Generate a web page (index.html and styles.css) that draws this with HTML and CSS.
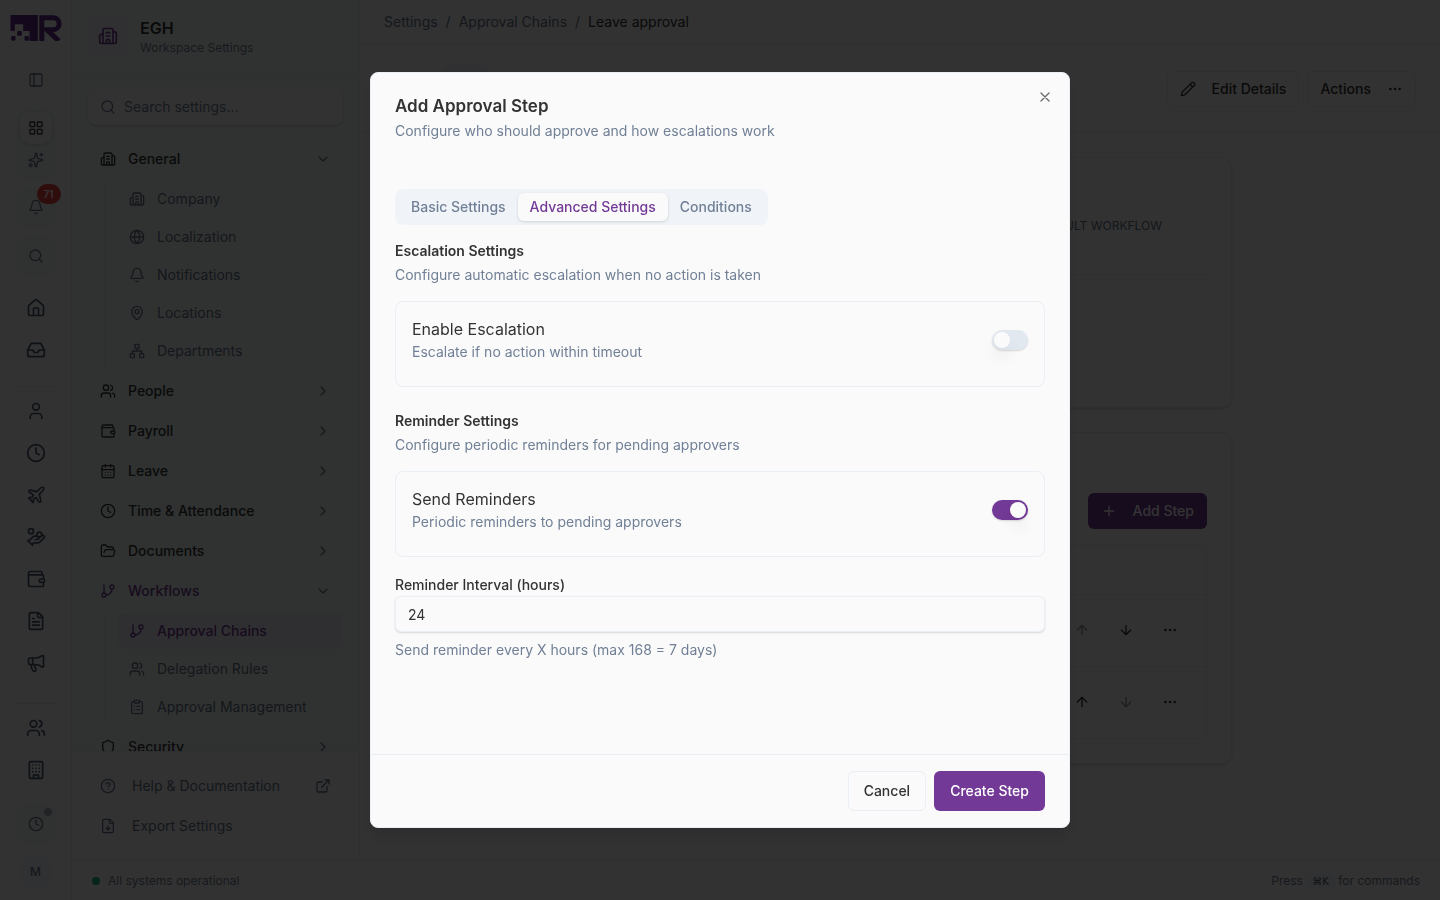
FILE: index.html
```html
<!DOCTYPE html>
<html lang="en">
<head>
<meta charset="utf-8">
<meta name="viewport" content="width=device-width, initial-scale=1">
<title>Leave approval</title>
<link rel="stylesheet" href="styles.css">
</head>
<body>
<svg class="sprite" aria-hidden="true">
  <symbol id="building2" viewBox="0 0 24 24"><path d="M10 12h4M10 8h4M14 21v-3a2 2 0 0 0-4 0v3M6 10H4a2 2 0 0 0-2 2v7a2 2 0 0 0 2 2h16a2 2 0 0 0 2-2V9a2 2 0 0 0-2-2h-2M6 21V5a2 2 0 0 1 2-2h8a2 2 0 0 1 2 2v16"/></symbol>
  <symbol id="panel" viewBox="0 0 24 24"><rect width="18" height="18" x="3" y="3" rx="2"/><path d="M9 3v18"/></symbol>
  <symbol id="grid" viewBox="0 0 24 24"><rect width="7" height="7" x="3" y="3" rx="1"/><rect width="7" height="7" x="14" y="3" rx="1"/><rect width="7" height="7" x="14" y="14" rx="1"/><rect width="7" height="7" x="3" y="14" rx="1"/></symbol>
  <symbol id="sparkles" viewBox="0 0 24 24"><path d="M11 2.8a1 1 0 0 1 2 0l1 5.6a2 2 0 0 0 1.600 1.600l5.600 1a1 1 0 0 1 0 2l-5.600 1a2 2 0 0 0-1.600 1.600l-1 5.600a1 1 0 0 1-2 0l-1-5.600a2 2 0 0 0-1.600-1.600l-5.600-1a1 1 0 0 1 0-2l5.600-1a2 2 0 0 0 1.600-1.600zM20 2v4M22 4h-4"/><circle cx="4" cy="20" r="2"/></symbol>
  <symbol id="bell" viewBox="0 0 24 24"><path d="M10.268 21a2 2 0 0 0 3.464 0M3.262 15.326A1 1 0 0 0 4 17h16a1 1 0 0 0 .74-1.673C19.410 13.956 18 12.499 18 8A6 6 0 0 0 6 8c0 4.499-1.411 5.956-2.738 7.326"/></symbol>
  <symbol id="search" viewBox="0 0 24 24"><circle cx="11" cy="11" r="8"/><path d="m21 21-4.300-4.300"/></symbol>
  <symbol id="home" viewBox="0 0 24 24"><path d="M15 21v-8a1 1 0 0 0-1-1h-4a1 1 0 0 0-1 1v8M3 10a2 2 0 0 1 .709-1.528l7-6a2 2 0 0 1 2.582 0l7 6A2 2 0 0 1 21 10v9a2 2 0 0 1-2 2H5a2 2 0 0 1-2-2z"/></symbol>
  <symbol id="inbox" viewBox="0 0 24 24"><path d="M22 12h-6l-2 3h-4l-2-3H2M5.450 5.110 2 12v6a2 2 0 0 0 2 2h16a2 2 0 0 0 2-2v-6l-3.450-6.890A2 2 0 0 0 16.760 4H7.240a2 2 0 0 0-1.790 1.110z"/></symbol>
  <symbol id="user" viewBox="0 0 24 24"><path d="M19 21v-2a4 4 0 0 0-4-4H9a4 4 0 0 0-4 4v2"/><circle cx="12" cy="7" r="4"/></symbol>
  <symbol id="clock" viewBox="0 0 24 24"><circle cx="12" cy="12" r="10"/><path d="M12 6v6l4 2"/></symbol>
  <symbol id="plane" viewBox="0 0 24 24"><path d="M17.800 19.200 16 11l3.500-3.500C21 6 21.500 4 21 3c-1-.5-3 0-4.500 1.500L13 8 4.800 6.200c-.5-.1-.9.1-1.100.5l-.3.5c-.2.5-.1 1 .3 1.300L9 12l-2 3H4l-1 1 3 2 2 3 1-1v-3l3-2 3.500 5.300c.3.400.8.500 1.300.3l.5-.2c.4-.3.600-.7.500-1.200z"/></symbol>
  <symbol id="handcoins" viewBox="0 0 24 24"><path d="M11 15h2a2 2 0 1 0 0-4h-3c-.6 0-1.100.2-1.400.6L3 17"/><path d="m7 21 1.600-1.400c.3-.4.800-.6 1.400-.6h4c1.100 0 2.100-.4 2.800-1.200l4.600-4.400a2 2 0 0 0-2.750-2.910l-4.200 3.900M2 16l6 6"/><circle cx="16" cy="9" r="2.900"/><circle cx="6" cy="5" r="3"/></symbol>
  <symbol id="wallet" viewBox="0 0 24 24"><path d="M19 7V4a1 1 0 0 0-1-1H5a2 2 0 0 0 0 4h15a1 1 0 0 1 1 1v4h-3a2 2 0 0 0 0 4h3a1 1 0 0 0 1-1v-2a1 1 0 0 0-1-1M3 5v14a2 2 0 0 0 2 2h15a1 1 0 0 0 1-1v-4"/></symbol>
  <symbol id="file" viewBox="0 0 24 24"><path d="M15 2H6a2 2 0 0 0-2 2v16a2 2 0 0 0 2 2h12a2 2 0 0 0 2-2V7ZM14 2v4a2 2 0 0 0 2 2h4M10 9H8M16 13H8M16 17H8"/></symbol>
  <symbol id="megaphone" viewBox="0 0 24 24"><path d="M11 6a13 13 0 0 0 8.400-2.800A1 1 0 0 1 21 4v12a1 1 0 0 1-1.600.8A13 13 0 0 0 11 14H5a2 2 0 0 1-2-2V8a2 2 0 0 1 2-2zM6 14a12 12 0 0 0 2.400 7.200 2 2 0 0 0 3.200-2.400A8 8 0 0 1 10 14M8 6v8"/></symbol>
  <symbol id="people" viewBox="0 0 24 24"><path d="M2 21v-2a4 4 0 0 1 4-4h6a4 4 0 0 1 4 4v2M16 3.130a4 4 0 0 1 0 7.750M22 21v-2a4 4 0 0 0-3-3.870"/><circle cx="9" cy="7" r="4"/></symbol>
  <symbol id="building" viewBox="0 0 24 24"><rect width="16" height="20" x="4" y="2" rx="2"/><path d="M9 22v-4h6v4M8 6h.01M16 6h.01M12 6h.01M12 10h.01M12 14h.01M16 10h.01M16 14h.01M8 10h.01M8 14h.01"/></symbol>
  <symbol id="globe" viewBox="0 0 24 24"><circle cx="12" cy="12" r="10"/><path d="M12 2a14.500 14.500 0 0 0 0 20 14.500 14.500 0 0 0 0-20M2 12h20"/></symbol>
  <symbol id="pin" viewBox="0 0 24 24"><path d="M20 10c0 4.993-5.539 10.193-7.399 11.799a1 1 0 0 1-1.202 0C9.539 20.193 4 14.993 4 10a8 8 0 0 1 16 0"/><circle cx="12" cy="10" r="3"/></symbol>
  <symbol id="network" viewBox="0 0 24 24"><rect x="16" y="16" width="6" height="6" rx="1"/><rect x="2" y="16" width="6" height="6" rx="1"/><rect x="9" y="2" width="6" height="6" rx="1"/><path d="M5 16v-3a1 1 0 0 1 1-1h12a1 1 0 0 1 1 1v3M12 12V8"/></symbol>
  <symbol id="calendar" viewBox="0 0 24 24"><path d="M8 2v4M16 2v4M3 10h18M8 14h.01M12 14h.01M16 14h.01M8 18h.01M12 18h.01M16 18h.01"/><rect width="18" height="18" x="3" y="4" rx="2"/></symbol>
  <symbol id="folder" viewBox="0 0 24 24"><path d="m6 14 1.500-2.900A2 2 0 0 1 9.240 10H20a2 2 0 0 1 1.940 2.500l-1.540 6a2 2 0 0 1-1.950 1.500H4a2 2 0 0 1-2-2V5a2 2 0 0 1 2-2h3.900a2 2 0 0 1 1.690.9l.81 1.200a2 2 0 0 0 1.670.9H18a2 2 0 0 1 2 2v2"/></symbol>
  <symbol id="branch" viewBox="0 0 24 24"><path d="M6 3v12M18 9a9 9 0 0 1-9 9"/><circle cx="18" cy="6" r="3"/><circle cx="6" cy="18" r="3"/></symbol>
  <symbol id="clipboard" viewBox="0 0 24 24"><rect width="8" height="4" x="8" y="2" rx="1"/><path d="M16 4h2a2 2 0 0 1 2 2v14a2 2 0 0 1-2 2H6a2 2 0 0 1-2-2V6a2 2 0 0 1 2-2h2M12 11h4M12 16h4M8 11h.01M8 16h.01"/></symbol>
  <symbol id="shield" viewBox="0 0 24 24"><path d="M20 13c0 5-3.500 7.500-7.660 8.950a1 1 0 0 1-.67-.01C7.500 20.500 4 18 4 13V6a1 1 0 0 1 1-1c2 0 4.500-1.200 6.240-2.720a1.170 1.170 0 0 1 1.520 0C14.510 3.810 17 5 19 5a1 1 0 0 1 1 1z"/></symbol>
  <symbol id="help" viewBox="0 0 24 24"><circle cx="12" cy="12" r="10"/><path d="M9.090 9a3 3 0 0 1 5.830 1c0 2-3 3-3 3M12 17h.01"/></symbol>
  <symbol id="external" viewBox="0 0 24 24"><path d="M15 3h6v6M10 14 21 3M18 13v6a2 2 0 0 1-2 2H5a2 2 0 0 1-2-2V8a2 2 0 0 1 2-2h6"/></symbol>
  <symbol id="filedown" viewBox="0 0 24 24"><path d="M15 2H6a2 2 0 0 0-2 2v16a2 2 0 0 0 2 2h12a2 2 0 0 0 2-2V7ZM14 2v4a2 2 0 0 0 2 2h4M12 18v-6M9 15l3 3 3-3"/></symbol>
  <symbol id="right" viewBox="0 0 24 24"><path d="m9 18 6-6-6-6"/></symbol>
  <symbol id="down" viewBox="0 0 24 24"><path d="m6 9 6 6 6-6"/></symbol>
  <symbol id="pencil" viewBox="0 0 24 24"><path d="M21.174 6.812a1 1 0 0 0-3.986-3.987L3.842 16.174a2 2 0 0 0-.5.83l-1.321 4.352a.5.5 0 0 0 .623.622l4.353-1.320a2 2 0 0 0 .83-.497zM15 5l4 4"/></symbol>
  <symbol id="dots" viewBox="0 0 24 24"><circle cx="12" cy="12" r="1"/><circle cx="19" cy="12" r="1"/><circle cx="5" cy="12" r="1"/></symbol>
  <symbol id="plus" viewBox="0 0 24 24"><path d="M5 12h14M12 5v14"/></symbol>
  <symbol id="arrowup" viewBox="0 0 24 24"><path d="m5 12 7-7 7 7M12 19V5"/></symbol>
  <symbol id="arrowdown" viewBox="0 0 24 24"><path d="M12 5v14M19 12l-7 7-7-7"/></symbol>
  <symbol id="close" viewBox="0 0 24 24"><path d="M18 6 6 18M6 6l12 12"/></symbol>
</svg>

<div class="app">
  <nav class="rail" aria-label="Primary">
    <svg class="logo" viewBox="0 0 153 78" role="img" aria-label="Logo">
      <path d="M3 0H82V78H57V48H38V28H13V48H0V3a3 3 0 0 1 3-3z"/>
      <rect x="20" y="48" width="14" height="14" rx="3"/><rect x="2" y="63" width="13" height="14" rx="4"/><rect x="42" y="63" width="13" height="14" rx="4"/>
      <path class="logo-line" d="M94 78V8H128a18 18 0 0 1 0 36H109L145 78"/>
    </svg>
    <button class="rail-toggle" aria-label="Toggle sidebar"><svg class="icon"><use href="#panel"/></svg></button>
    <div class="rail-switch">
      <button class="rail-pill on" aria-label="Modules"><svg class="icon"><use href="#grid"/></svg></button>
      <button class="rail-pill" aria-label="Assistant"><svg class="icon"><use href="#sparkles"/></svg></button>
    </div>
    <div class="rail-tools">
      <button class="rail-tile" aria-label="Alerts"><svg class="icon"><use href="#bell"/></svg><span class="count">71</span></button>
      <button class="rail-tile" aria-label="Search"><svg class="icon"><use href="#search"/></svg></button>
    </div>
    <div class="rail-group first">
      <a href="#" aria-label="Home"><svg class="icon lg"><use href="#home"/></svg></a>
      <a href="#" aria-label="Inbox"><svg class="icon lg"><use href="#inbox"/></svg></a>
    </div>
    <div class="rail-group">
      <a href="#" aria-label="Profile"><svg class="icon lg"><use href="#user"/></svg></a>
      <a href="#" aria-label="Time"><svg class="icon lg"><use href="#clock"/></svg></a>
      <a href="#" aria-label="Leave"><svg class="icon lg"><use href="#plane"/></svg></a>
      <a href="#" aria-label="Benefits"><svg class="icon lg"><use href="#handcoins"/></svg></a>
      <a href="#" aria-label="Payroll"><svg class="icon lg"><use href="#wallet"/></svg></a>
      <a href="#" aria-label="Documents"><svg class="icon lg"><use href="#file"/></svg></a>
      <a href="#" aria-label="Announcements"><svg class="icon lg"><use href="#megaphone"/></svg></a>
    </div>
    <div class="rail-group last">
      <a href="#" aria-label="People"><svg class="icon lg"><use href="#people"/></svg></a>
      <a href="#" aria-label="Company"><svg class="icon lg"><use href="#building"/></svg></a>
    </div>
    <div class="rail-end">
      <button class="rail-tile" aria-label="Clock in"><svg class="icon"><use href="#clock"/></svg><span class="dot"></span></button>
      <button class="avatar">M</button>
    </div>
  </nav>

  <div class="shell">
    <div class="columns">
      <aside class="sidebar">
        <header class="workspace">
          <span class="tile"><svg class="icon lg"><use href="#building2"/></svg></span>
          <div><h2>EGH</h2><p>Workspace Settings</p></div>
        </header>
        <label class="search"><svg class="icon"><use href="#search"/></svg><input type="search" placeholder="Search settings..." aria-label="Search settings"></label>
        <nav class="menu" aria-label="Settings">
          <button class="row"><svg class="icon"><use href="#building2"/></svg><span>General</span><svg class="icon chev"><use href="#down"/></svg></button>
          <div class="sub">
            <a href="#"><svg class="icon"><use href="#building2"/></svg>Company</a>
            <a href="#"><svg class="icon"><use href="#globe"/></svg>Localization</a>
            <a href="#"><svg class="icon"><use href="#bell"/></svg>Notifications</a>
            <a href="#"><svg class="icon"><use href="#pin"/></svg>Locations</a>
            <a href="#"><svg class="icon"><use href="#network"/></svg>Departments</a>
          </div>
          <button class="row"><svg class="icon"><use href="#people"/></svg><span>People</span><svg class="icon chev"><use href="#right"/></svg></button>
          <button class="row"><svg class="icon"><use href="#wallet"/></svg><span>Payroll</span><svg class="icon chev"><use href="#right"/></svg></button>
          <button class="row"><svg class="icon"><use href="#calendar"/></svg><span>Leave</span><svg class="icon chev"><use href="#right"/></svg></button>
          <button class="row"><svg class="icon"><use href="#clock"/></svg><span>Time &amp; Attendance</span><svg class="icon chev"><use href="#right"/></svg></button>
          <button class="row"><svg class="icon"><use href="#folder"/></svg><span>Documents</span><svg class="icon chev"><use href="#right"/></svg></button>
          <button class="row current"><svg class="icon"><use href="#branch"/></svg><span>Workflows</span><svg class="icon chev"><use href="#down"/></svg></button>
          <div class="sub">
            <a href="#" class="active" aria-current="page"><svg class="icon"><use href="#branch"/></svg>Approval Chains</a>
            <a href="#"><svg class="icon"><use href="#people"/></svg>Delegation Rules</a>
            <a href="#"><svg class="icon"><use href="#clipboard"/></svg>Approval Management</a>
          </div>
          <button class="row"><svg class="icon"><use href="#shield"/></svg><span>Security</span><svg class="icon chev"><use href="#right"/></svg></button>
        </nav>
        <div class="aside-links">
          <a href="#"><svg class="icon"><use href="#help"/></svg><span>Help &amp; Documentation</span><svg class="icon"><use href="#external"/></svg></a>
          <a href="#"><svg class="icon"><use href="#filedown"/></svg><span>Export Settings</span></a>
        </div>
      </aside>

      <main class="main">
        <nav class="crumbs" aria-label="Breadcrumb"><a href="#">Settings</a><span>/</span><a href="#">Approval Chains</a><span>/</span><b>Leave approval</b></nav>
        <header class="page-head">
          <span class="badge"></span>
          <div class="head-actions">
            <button class="btn outline wide"><svg class="icon"><use href="#pencil"/></svg>Edit Details</button>
            <button class="btn outline wide">Actions<svg class="icon"><use href="#dots"/></svg></button>
          </div>
        </header>
        <div class="content">
          <section class="card overview"><div class="facts"><span>Default workflow</span></div></section>
          <section class="card steps">
            <div class="steps-head"><button class="btn primary wide"><svg class="icon"><use href="#plus"/></svg>Add Step</button></div>
            <div class="table-wrap">
              <table>
                <thead><tr><th></th></tr></thead>
                <tbody>
                  <tr><td><div class="tools"><button disabled aria-label="Move up"><svg class="icon"><use href="#arrowup"/></svg></button><button aria-label="Move down"><svg class="icon"><use href="#arrowdown"/></svg></button><button aria-label="More"><svg class="icon"><use href="#dots"/></svg></button></div></td></tr>
                  <tr><td><div class="tools"><button aria-label="Move up"><svg class="icon"><use href="#arrowup"/></svg></button><button disabled aria-label="Move down"><svg class="icon"><use href="#arrowdown"/></svg></button><button aria-label="More"><svg class="icon"><use href="#dots"/></svg></button></div></td></tr>
                </tbody>
              </table>
            </div>
          </section>
        </div>
      </main>
    </div>
    <footer class="status">
      <span class="health"><i></i>All systems operational</span>
      <span>Press <kbd>⌘K</kbd> for commands</span>
    </footer>
  </div>
</div>

<div class="overlay">
  <form class="modal" role="dialog" aria-modal="true" aria-labelledby="dlg-title">
    <button type="button" class="close" aria-label="Close"><svg class="icon"><use href="#close"/></svg></button>
    <header class="modal-head">
      <h1 id="dlg-title">Add Approval Step</h1>
      <p class="muted">Configure who should approve and how escalations work</p>
    </header>
    <div class="modal-body">
      <div class="tabs" role="tablist">
        <button type="button" role="tab" aria-selected="false">Basic Settings</button>
        <button type="button" role="tab" aria-selected="true">Advanced Settings</button>
        <button type="button" role="tab" aria-selected="false">Conditions</button>
      </div>
      <section class="block">
        <h3>Escalation Settings</h3>
        <p class="muted">Configure automatic escalation when no action is taken</p>
        <div class="option">
          <div><label for="escalation">Enable Escalation</label><p class="muted">Escalate if no action within timeout</p></div>
          <input id="escalation" class="switch" type="checkbox" role="switch">
        </div>
      </section>
      <section class="block">
        <h3>Reminder Settings</h3>
        <p class="muted">Configure periodic reminders for pending approvers</p>
        <div class="option">
          <div><label for="reminders">Send Reminders</label><p class="muted">Periodic reminders to pending approvers</p></div>
          <input id="reminders" class="switch" type="checkbox" role="switch" checked>
        </div>
      </section>
      <div class="field">
        <label for="interval">Reminder Interval (hours)</label>
        <input id="interval" type="text" inputmode="numeric" value="24">
        <p class="muted">Send reminder every X hours (max 168 = 7 days)</p>
      </div>
    </div>
    <footer class="modal-foot">
      <button type="button" class="btn outline tall">Cancel</button>
      <button type="submit" class="btn primary tall">Create Step</button>
    </footer>
  </form>
</div>
</body>
</html>
```
FILE: styles.css
```css
:root {
  --bg: #fafafa;
  --tint: #f1f8f5;
  --line: #e5ebf2;
  --ink: #333333;
  --muted: #718096;
  --purple: #733996;
}

* { box-sizing: border-box; }

body {
  margin: 0;
  background: var(--bg);
  color: var(--ink);
  font: 14px/20px Inter, "Liberation Sans", sans-serif;
}

h1, h2, h3, p { margin: 0; }
a { color: inherit; text-decoration: none; }
button, input { font: inherit; color: inherit; }
button { margin: 0; padding: 0; border: 0; background: none; }

.sprite { display: none; }

.icon {
  width: 16px;
  height: 16px;
  flex: none;
  fill: none;
  stroke: currentColor;
  stroke-width: 2;
  stroke-linecap: round;
  stroke-linejoin: round;
}
.icon.lg { width: 20px; height: 20px; }

.app { display: flex; height: 100vh; overflow: hidden; }

/* Icon rail */
.rail {
  display: flex;
  flex-direction: column;
  align-items: center;
  flex: none;
  width: 72px;
  padding: 15px 0 12px;
  border-right: 1px solid var(--line);
  color: #64748b;
}
.rail > * { flex: none; }
.logo { width: 52px; height: 26px; fill: #5f2a8a; }
.logo-line { fill: none; stroke: #5f2a8a; stroke-width: 15; }
.rail-toggle { display: grid; place-items: center; width: 32px; height: 32px; margin-top: 23px; }
.rail-switch {
  display: flex;
  flex-direction: column;
  width: 40px;
  margin-top: 12px;
  padding: 4px;
  border-radius: 10px;
  background: var(--tint);
}
.rail-pill { display: grid; place-items: center; width: 32px; height: 32px; border-radius: 10px; }
.rail-pill.on { background: var(--bg); color: var(--ink); box-shadow: 0 1px 4px rgba(0, 0, 0, .16); }
.rail-tools { display: flex; flex-direction: column; gap: 9px; margin-top: 7px; }
.rail-tile {
  position: relative;
  display: grid;
  place-items: center;
  width: 40px;
  height: 40px;
  border-radius: 10px;
  background: var(--tint);
}
.count {
  position: absolute;
  top: -3px;
  right: -5px;
  padding: 0 7px;
  border-radius: 10px;
  background: #ef4444;
  color: #fff;
  font-size: 10px;
  font-weight: 600;
}
.dot { position: absolute; top: 4px; right: 4px; width: 8px; height: 8px; border-radius: 50%; background: #a3adbb; }
.rail-group {
  display: flex;
  flex-direction: column;
  align-items: center;
  gap: 22px;
  width: 40px;
  padding: 14px 0 30px;
  border-top: 1px solid var(--line);
  color: #475569;
}
.rail-group.first { padding: 22px 0 26px; border: 0; }
.rail-group.last { padding-bottom: 0; }
.rail-group a { display: grid; }
.rail-end { display: flex; flex-direction: column; align-items: center; gap: 12px; margin-top: auto; }
.avatar { width: 32px; height: 32px; border-radius: 50%; background: #f1f5f9; color: #64748b; font-size: 12px; font-weight: 500; }

.shell { display: flex; flex: 1; flex-direction: column; min-width: 0; }
.columns { display: flex; flex: 1; min-height: 0; }

/* Settings sidebar */
.sidebar {
  display: flex;
  flex: none;
  flex-direction: column;
  width: 288px;
  border-right: 1px solid var(--line);
  background: var(--tint);
}
.workspace { display: flex; align-items: center; gap: 12px; padding: 16px; border-bottom: 1px solid var(--line); }
.tile { display: grid; place-items: center; width: 40px; height: 40px; border-radius: 10px; background: #ede9f4; color: var(--purple); }
.workspace h2 { font-size: 16px; line-height: 24px; font-weight: 600; }
.workspace p { color: var(--muted); font-size: 12px; line-height: 16px; }
.search {
  display: flex;
  align-items: center;
  gap: 8px;
  height: 36px;
  margin: 16px 16px 14px;
  padding: 0 12px;
  border-radius: 8px;
  background: var(--bg);
  box-shadow: 0 1px 3px rgba(0, 0, 0, .18);
  color: var(--muted);
}
.search input { flex: 1; min-width: 0; padding: 0; border: 0; outline: 0; background: none; }
.search input::placeholder { color: var(--muted); opacity: 1; }
.menu { flex: 1; min-height: 0; overflow: hidden; padding: 0 16px; }
.row { display: flex; align-items: center; gap: 12px; width: 100%; height: 40px; padding: 0 12px; font-weight: 500; text-align: left; }
.row span { flex: 1; }
.row.current { color: var(--purple); }
.chev { color: #64748b; }
.sub {
  display: flex;
  flex-direction: column;
  gap: 2px;
  margin: 2px 0 2px 16px;
  padding-left: 12px;
  border-left: 1px solid var(--line);
}
.sub a { display: flex; align-items: center; gap: 12px; height: 36px; padding: 0 12px; border-radius: 8px; color: #64748b; }
.sub a.active { background: #ebe8f2; color: var(--purple); font-weight: 500; }
.aside-links { padding: 14px 16px; border-top: 1px solid var(--line); background: var(--bg); color: #64748b; }
.aside-links a { display: flex; align-items: center; gap: 16px; height: 40px; padding: 0 12px; }
.aside-links span { flex: 1; }

/* Main area */
.main { flex: 1; min-width: 0; overflow: hidden; }
.crumbs { display: flex; align-items: center; gap: 8px; height: 45px; padding: 0 24px; border-bottom: 1px solid var(--line); color: #64748b; }
.crumbs b { color: var(--ink); font-weight: 400; }
.page-head { display: flex; align-items: center; justify-content: space-between; height: 88px; padding: 0 24px 0 80px; border-bottom: 1px solid var(--line); }
.badge { align-self: flex-start; width: 52px; height: 24px; margin-top: 20px; border-radius: 12px; background: #ede9f4; }
.head-actions { display: flex; gap: 8px; }
.content { display: flex; flex-direction: column; gap: 24px; max-width: 896px; padding: 24px; }
.card { padding: 24px; border: 1px solid var(--line); border-radius: 12px; box-shadow: 0 1px 3px rgba(0, 0, 0, .18); }
.overview { height: 251px; }
.facts { display: flex; justify-content: flex-end; padding: 34px 45px 38px; border-bottom: 1px solid var(--line); color: #64748b; font-size: 12px; text-transform: uppercase; }
.steps { padding-top: 60px; }
.steps-head { display: flex; justify-content: flex-end; margin-bottom: 16px; }
.table-wrap { border: 1px solid var(--line); border-radius: 6px; }
table { width: 100%; border-collapse: collapse; }
th { height: 48px; padding: 0; }
td { height: 72px; padding: 0 16px; border-top: 1px solid var(--line); }
.tools { display: flex; justify-content: flex-end; gap: 4px; }
.tools button { display: grid; place-items: center; width: 40px; height: 36px; }
.tools button:disabled { opacity: .5; }

.status { display: flex; align-items: center; justify-content: space-between; height: 40px; padding: 0 20px; border-top: 1px solid var(--line); color: var(--muted); font-size: 12px; }
.health { display: flex; align-items: center; gap: 8px; }
.health i { width: 8px; height: 8px; border-radius: 50%; background: #10b981; }
kbd { padding: 2px 6px; border-radius: 4px; background: #f1f5f9; color: #475569; font: 10px/16px "DejaVu Sans", sans-serif; }

/* Buttons */
.btn { display: inline-flex; align-items: center; justify-content: center; height: 36px; padding: 0 12px; border: 1px solid transparent; border-radius: 6px; font-weight: 500; }
.btn.wide { gap: 16px; }
.btn.tall { height: 40px; padding: 0 15px; }
.btn.outline { border-color: var(--line); }
.btn.primary { background: var(--purple); color: #fff; }

/* Dialog */
.overlay { position: fixed; inset: 0; display: flex; align-items: center; justify-content: center; background: rgba(0, 0, 0, .8); }
.modal {
  --line: #e9eff5;
  position: relative;
  display: flex;
  flex-direction: column;
  width: 700px;
  max-width: 100%;
  height: 84vh;
  border: 1px solid var(--line);
  border-radius: 8px;
  background: var(--bg);
  box-shadow: 0 10px 15px rgba(0, 0, 0, .1);
}
.close { position: absolute; top: 16px; right: 16px; display: grid; color: #6b6b6b; }
.muted { color: var(--muted); }
.modal-head { padding: 20px 24px 24px; }
.modal-head h1 { margin-bottom: 2px; font-size: 17px; line-height: 26px; font-weight: 600; }
.modal-body { flex: 1; min-height: 0; overflow: auto; padding: 24px 24px 0; }
.tabs { display: inline-flex; padding: 4px; border-radius: 8px; background: #f0f4f9; vertical-align: top; }
.tabs button { height: 28px; padding: 0 12px; border-radius: 6px; color: var(--muted); font-weight: 500; }
.tabs button[aria-selected="true"] { background: var(--bg); color: var(--purple); box-shadow: 0 1px 3px rgba(0, 0, 0, .14); }
.block { margin-top: 16px; }
.block + .block { margin-top: 24px; }
.block h3 { margin-bottom: 4px; font-size: 14px; line-height: 20px; font-weight: 600; }
.option { display: flex; align-items: center; justify-content: space-between; margin-top: 16px; padding: 16px 16px 24px; border: 1px solid var(--line); border-radius: 8px; }
.option label { display: block; margin-bottom: 2px; font-size: 16px; line-height: 22px; }
.switch {
  appearance: none;
  display: flex;
  width: 36px;
  height: 20px;
  margin: 0;
  padding: 2px;
  border-radius: 10px;
  background: #e2e8f0;
  box-shadow: 0 1px 2px rgba(0, 0, 0, .14);
}
.switch::before { content: ""; width: 16px; height: 16px; border-radius: 50%; background: var(--bg); box-shadow: 0 10px 15px rgba(0, 0, 0, .06); }
.switch:checked { justify-content: flex-end; background: var(--purple); }
.field { display: flex; flex-direction: column; margin-top: 20px; }
.field label { margin-bottom: 3px; line-height: 16px; font-weight: 500; }
.field input { height: 36px; padding: 0 12px; border: 1px solid var(--line); border-radius: 6px; background: var(--bg); box-shadow: 0 1px 2px rgba(0, 0, 0, .14); }
.field p { margin-top: 8px; }
.modal-foot { display: flex; justify-content: flex-end; gap: 8px; padding: 16px 24px; border-top: 1px solid var(--line); }
```
